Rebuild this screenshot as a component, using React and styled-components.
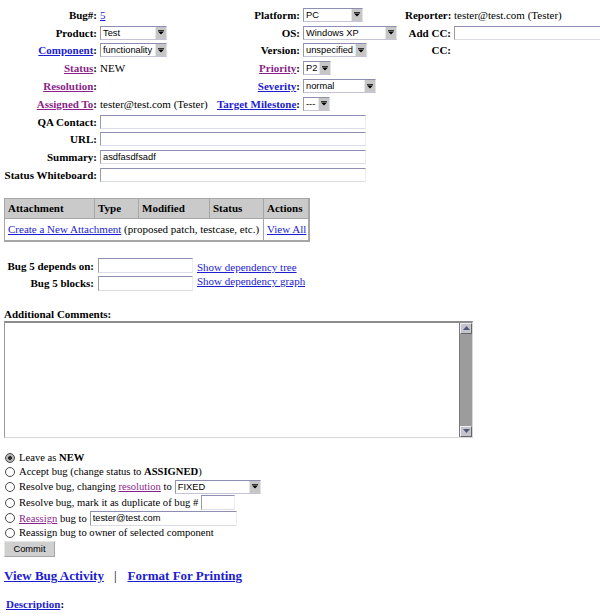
import React from 'react';
import styled, { createGlobalStyle } from 'styled-components';

const GlobalStyle = createGlobalStyle`
  html, body {
    margin: 0;
    padding: 0;
    background: #fff;
    overflow: hidden;
  }
  body {
    font-family: "Liberation Serif", "Times New Roman", serif;
    font-size: 11px;
    color: #000;
  }
`;

const BLUE = '#1c1cd0';
const PURPLE = '#8a1f8a';

const Page = styled.div`
  width: 600px;
  box-sizing: border-box;
  padding: 6px 0 0 4px;
  overflow: hidden;
`;

const Link = styled.a`
  color: ${(p) => (p.$visited ? PURPLE : BLUE)};
  text-decoration: underline;
  cursor: pointer;
`;

// ---- top field grid ----
const Fields = styled.div`
  display: grid;
  grid-template-columns: 96px 110px 93px 102px 49px 1fr;
  grid-auto-rows: 17.8px;
  align-items: center;
  white-space: nowrap;
`;

const Label = styled.div`
  grid-column: ${(p) => p.$col};
  text-align: right;
  font-weight: bold;
  padding-right: 3px;
`;

const Value = styled.div`
  grid-column: ${(p) => p.$col} / span ${(p) => p.$span || 1};
  display: flex;
  align-items: center;
`;

const sans = `"Liberation Sans", Arial, sans-serif`;

const SelectBox = styled.span`
  display: inline-flex;
  align-items: stretch;
  box-sizing: border-box;
  width: ${(p) => p.$w}px;
  height: 14px;
  border: 1px solid;
  border-color: #8e8eb2 #e2e2ea #c4c4d6 #9a9a9a;
  background: #fff;
  font-family: ${sans};
  font-size: 9.3px;
  vertical-align: middle;
  overflow: hidden;
`;

const SelectText = styled.span`
  flex: 1;
  padding-left: 2px;
  line-height: 12px;
  white-space: nowrap;
  overflow: hidden;
`;

const ArrowBtn = styled.span`
  width: 10px;
  background: #c6c6c6;
  border-left: 1px solid #e6e6e6;
  display: flex;
  align-items: center;
  justify-content: center;
`;

const Select = ({ w, value }) => (
  <SelectBox $w={w}>
    <SelectText>{value}</SelectText>
    <ArrowBtn>
      <svg width="6" height="5" viewBox="0 0 6 5">
        <rect x="0" y="0" width="6" height="1" fill="#333" />
        <path d="M0 1.5 H6 L3 4.5 Z" fill="#000" />
      </svg>
    </ArrowBtn>
  </SelectBox>
);

const TextInput = styled.input`
  box-sizing: border-box;
  width: ${(p) => p.$w}px;
  height: ${(p) => p.$h || 14}px;
  margin: 0;
  padding: 0 2px;
  border: 1px solid;
  border-color: #8e8eb2 #ececf2 #dcdce6 #9c9c9c;
  background: #fff;
  font-family: ${sans};
  font-size: 9.3px;
  color: #000;
  vertical-align: middle;
  outline: none;
`;

// ---- attachments ----
const AttachTable = styled.table`
  margin-top: 14px;
  border-collapse: collapse;
  table-layout: fixed;
  width: 304px;
  border: 2px solid #a6a6a6;
  border-top-width: 1px;
  border-left-width: 1px;
`;

const Th = styled.th`
  box-sizing: border-box;
  width: ${(p) => p.$w}px;
  background: #cacaca;
  border: 1px solid #a6a6a6;
  text-align: left;
  font-weight: bold;
  padding: 0 3px;
  height: 20px;
  white-space: nowrap;
`;

const Td = styled.td`
  border: 1px solid #a6a6a6;
  padding: 0 3px;
  height: 21px;
  white-space: nowrap;
  overflow: hidden;
`;

// ---- dependencies ----
const Deps = styled.div`
  margin-top: 15px;
  display: grid;
  grid-template-columns: 94px 99px auto;
  grid-template-rows: 17.5px 17.5px;
  align-items: center;
  white-space: nowrap;
`;

const DepLabel = styled.div`
  text-align: right;
  font-weight: bold;
  padding-right: 4px;
`;

const DepLinks = styled.div`
  grid-column: 3;
  grid-row: 1 / span 2;
  display: flex;
  flex-direction: column;
  line-height: 14px;
`;

// ---- comments ----
const CommentsTitle = styled.div`
  margin-top: 15px;
  font-weight: bold;
  line-height: 14px;
`;

const CommentsBox = styled.div`
  display: flex;
  box-sizing: border-box;
  width: 469px;
  height: 117px;
  border: 1px solid;
  border-top: 2px solid #8c8c8c;
  border-color: #8c8c8c #d8d8d8 #d8d8d8 #9a9a9a;
  background: #fff;
`;

const CommentsArea = styled.textarea`
  flex: 1;
  border: none;
  resize: none;
  outline: none;
  padding: 2px;
  font-family: "Liberation Mono", monospace;
  font-size: 10px;
`;

const Scrollbar = styled.div`
  width: 12px;
  display: flex;
  flex-direction: column;
  background: #9c9c9c;
  border-left: 1px solid #7a7a7a;
`;

const ScrollBtn = styled.div`
  height: 11px;
  box-sizing: border-box;
  background: #c4c4cc;
  border: 1px solid;
  border-color: #eee #666 #666 #eee;
  display: flex;
  align-items: center;
  justify-content: center;
`;

const ScrollTrack = styled.div`
  flex: 1;
`;

// ---- status change radios ----
const Actions = styled.div`
  margin-top: 13px;
  font-size: 10.6px;
`;

const RadioRow = styled.label`
  display: flex;
  align-items: center;
  height: ${(p) => p.$h || 14}px;
  white-space: nowrap;
  gap: 3px;
`;

const Radio = styled.input.attrs({ type: 'radio' })`
  appearance: none;
  box-sizing: border-box;
  width: 10px;
  height: 10px;
  margin: 0 1px 0 1px;
  border: 1.5px solid #4a4a4a;
  border-radius: 50%;
  background: #fff;
  &:checked {
    background: radial-gradient(circle, #2a2a2a 0 1.6px, #b4b4b4 2.2px);
  }
`;

const Commit = styled.button`
  margin-top: 1px;
  width: 51px;
  height: 16px;
  padding: 0;
  background: #cfcfcf;
  border: 1px solid;
  border-color: #e6e6e6 #a6a6a6 #a6a6a6 #e6e6e6;
  font-family: ${sans};
  font-size: 9.3px;
  color: #000;
`;

const BigLinks = styled.div`
  margin-top: 11px;
  font-size: 13px;
  line-height: 16px;
  font-weight: bold;
  white-space: nowrap;
`;

const Sep = styled.span`
  font-weight: normal;
  padding: 0 11px 0 10px;
`;

const Description = styled.div`
  margin-top: 13px;
  padding-left: 2px;
  font-weight: bold;
  line-height: 14px;
`;

const TriUp = () => (
  <svg width="7" height="4" viewBox="0 0 7 4">
    <path d="M0 4 L3.5 0 L7 4 Z" fill="#55557a" />
  </svg>
);

const TriDown = () => (
  <svg width="7" height="4" viewBox="0 0 7 4">
    <path d="M0 0 L3.5 4 L7 0 Z" fill="#55557a" />
  </svg>
);

const App = () => {
  return (
    <Page>
      <GlobalStyle />

      <Fields>
        <Label $col={1}>Bug#:</Label>
        <Value $col={2}><Link>5</Link></Value>
        <Label $col={3}>Platform:</Label>
        <Value $col={4}><Select w={60} value="PC" /></Value>
        <Label $col={5}>Reporter:</Label>
        <Value $col={6}>tester@test.com (Tester)</Value>

        <Label $col={1}>Product:</Label>
        <Value $col={2}><Select w={67} value="Test" /></Value>
        <Label $col={3}>OS:</Label>
        <Value $col={4}><Select w={94} value="Windows XP" /></Value>
        <Label $col={5}>Add CC:</Label>
        <Value $col={6}><TextInput $w={170} /></Value>

        <Label $col={1}><Link>Component</Link>:</Label>
        <Value $col={2}><Select w={67} value="functionality" /></Value>
        <Label $col={3}>Version:</Label>
        <Value $col={4}><Select w={64} value="unspecified" /></Value>
        <Label $col={5}>CC:</Label>

        <Label $col={1}><Link $visited>Status</Link>:</Label>
        <Value $col={2}>NEW</Value>
        <Label $col={3}><Link $visited>Priority</Link>:</Label>
        <Value $col={4}><Select w={28} value="P2" /></Value>

        <Label $col={1}><Link $visited>Resolution</Link>:</Label>
        <Value $col={2} />
        <Label $col={3}><Link>Severity</Link>:</Label>
        <Value $col={4}><Select w={73} value="normal" /></Value>

        <Label $col={1}><Link $visited>Assigned To</Link>:</Label>
        <Value $col={2}>tester@test.com (Tester)</Value>
        <Label $col={3}><Link>Target Milestone</Link>:</Label>
        <Value $col={4}><Select w={27} value="---" /></Value>

        <Label $col={1}>QA Contact:</Label>
        <Value $col={2} $span={5}><TextInput $w={266} /></Value>

        <Label $col={1}>URL:</Label>
        <Value $col={2} $span={5}><TextInput $w={266} /></Value>

        <Label $col={1}>Summary:</Label>
        <Value $col={2} $span={5}><TextInput $w={266} defaultValue="asdfasdfsadf" /></Value>

        <Label $col={1}>Status Whiteboard:</Label>
        <Value $col={2} $span={5}><TextInput $w={266} /></Value>
      </Fields>

      <AttachTable>
        <thead>
          <tr>
            <Th $w={90}>Attachment</Th>
            <Th $w={44}>Type</Th>
            <Th $w={71}>Modified</Th>
            <Th $w={54}>Status</Th>
            <Th $w={45}>Actions</Th>
          </tr>
        </thead>
        <tbody>
          <tr>
            <Td colSpan={4}>
              <Link>Create a New Attachment</Link> (proposed patch, testcase, etc.)
            </Td>
            <Td><Link>View All</Link></Td>
          </tr>
        </tbody>
      </AttachTable>

      <Deps>
        <DepLabel>Bug 5 depends on:</DepLabel>
        <div><TextInput $w={95} $h={15} /></div>
        <DepLinks>
          <Link>Show dependency tree</Link>
          <Link>Show dependency graph</Link>
        </DepLinks>
        <DepLabel>Bug 5 blocks:</DepLabel>
        <div><TextInput $w={95} $h={15} /></div>
      </Deps>

      <CommentsTitle>Additional Comments:</CommentsTitle>
      <CommentsBox>
        <CommentsArea />
        <Scrollbar>
          <ScrollBtn><TriUp /></ScrollBtn>
          <ScrollTrack />
          <ScrollBtn><TriDown /></ScrollBtn>
        </Scrollbar>
      </CommentsBox>

      <Actions>
        <RadioRow>
          <Radio name="knob" defaultChecked />
          <span>Leave as <b>NEW</b></span>
        </RadioRow>
        <RadioRow>
          <Radio name="knob" />
          <span>Accept bug (change status to <b>ASSIGNED</b>)</span>
        </RadioRow>
        <RadioRow $h={16}>
          <Radio name="knob" />
          <span>Resolve bug, changing <Link $visited>resolution</Link> to</span>
          <Select w={86} value="FIXED" />
        </RadioRow>
        <RadioRow $h={16}>
          <Radio name="knob" />
          <span>Resolve bug, mark it as duplicate of bug #</span>
          <TextInput $w={34} $h={15} />
        </RadioRow>
        <RadioRow $h={15}>
          <Radio name="knob" />
          <span><Link $visited>Reassign</Link> bug to</span>
          <TextInput $w={147} $h={15} defaultValue="tester@test.com" />
        </RadioRow>
        <RadioRow>
          <Radio name="knob" />
          <span>Reassign bug to owner of selected component</span>
        </RadioRow>
        <Commit>Commit</Commit>
      </Actions>

      <BigLinks>
        <Link>View Bug Activity</Link>
        <Sep>|</Sep>
        <Link>Format For Printing</Link>
      </BigLinks>

      <Description>
        <Link>Description</Link>:
      </Description>
    </Page>
  );
};

export default App;
